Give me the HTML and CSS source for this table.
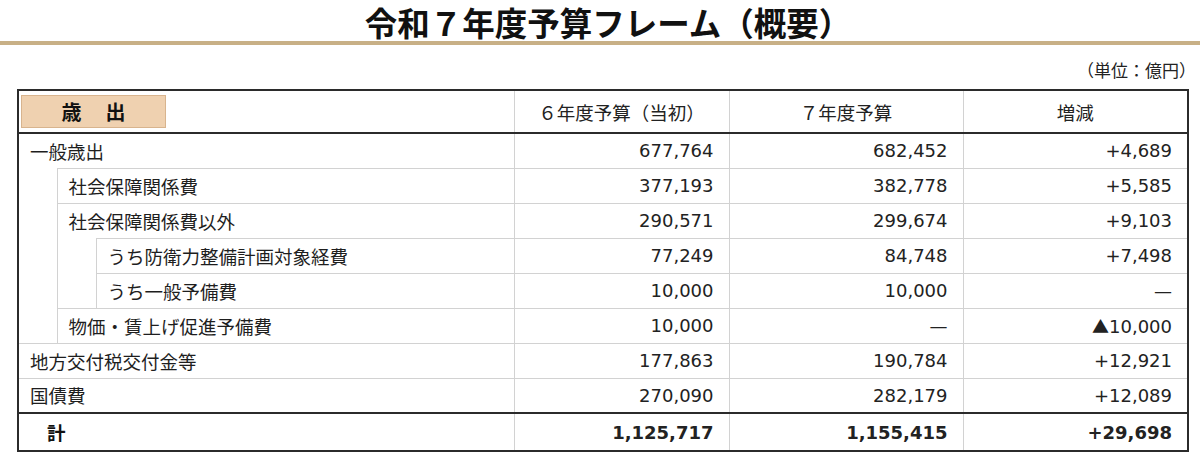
FILE: index.html
```html
<!DOCTYPE html>
<html lang="ja">
<head>
<meta charset="utf-8">
<title>令和７年度予算フレーム（概要）</title>
<link rel="stylesheet" href="styles.css">
</head>
<body>
<h1 class="title">令和７年度予算フレーム（概要）</h1>
<div class="rule"></div>
<div class="unit">（単位：億円）</div>
<table class="frame">
  <colgroup>
    <col class="c-ind">
    <col class="c-ind">
    <col class="c-label">
    <col class="c-prev">
    <col class="c-cur">
    <col class="c-diff">
  </colgroup>
  <thead>
    <tr class="head">
      <th colspan="3" class="h-first"><span class="tag">歳出</span></th>
      <th class="h-num">６年度予算（当初）</th>
      <th class="h-num">７年度予算</th>
      <th class="h-num">増減</th>
    </tr>
  </thead>
  <tbody>
    <tr>
      <td colspan="3" class="lbl">一般歳出</td>
      <td class="num">677,764</td><td class="num">682,452</td><td class="num">+4,689</td>
    </tr>
    <tr>
      <td rowspan="5" class="ind"></td>
      <td colspan="2" class="lbl">社会保障関係費</td>
      <td class="num">377,193</td><td class="num">382,778</td><td class="num">+5,585</td>
    </tr>
    <tr>
      <td colspan="2" class="lbl">社会保障関係費以外</td>
      <td class="num">290,571</td><td class="num">299,674</td><td class="num">+9,103</td>
    </tr>
    <tr>
      <td rowspan="2" class="ind"></td>
      <td class="lbl">うち防衛力整備計画対象経費</td>
      <td class="num">77,249</td><td class="num">84,748</td><td class="num">+7,498</td>
    </tr>
    <tr>
      <td class="lbl">うち一般予備費</td>
      <td class="num">10,000</td><td class="num">10,000</td><td class="num"><span class="dash">—</span></td>
    </tr>
    <tr>
      <td colspan="2" class="lbl">物価・賃上げ促進予備費</td>
      <td class="num">10,000</td><td class="num"><span class="dash">—</span></td><td class="num"><span class="tri">▲</span>10,000</td>
    </tr>
    <tr>
      <td colspan="3" class="lbl">地方交付税交付金等</td>
      <td class="num">177,863</td><td class="num">190,784</td><td class="num">+12,921</td>
    </tr>
    <tr>
      <td colspan="3" class="lbl">国債費</td>
      <td class="num">270,090</td><td class="num">282,179</td><td class="num">+12,089</td>
    </tr>
    <tr class="total">
      <td colspan="3" class="lbl t-lbl">計</td>
      <td class="num">1,125,717</td><td class="num">1,155,415</td><td class="num">+29,698</td>
    </tr>
  </tbody>
</table>
</body>
</html>
```
FILE: styles.css
```css
html, body {
  margin: 0;
  padding: 0;
  background: #ffffff;
}
body {
  width: 1200px;
  height: 455px;
  overflow: hidden;
  font-family: "Noto Sans CJK JP", "Noto Sans", sans-serif;
  color: #1e1e1e;
}
.title {
  margin: 0;
  height: 41px;
  font-size: 32.5px;
  line-height: 44px;
  font-weight: 700;
  text-align: center;
  color: #111;
  padding-left: 16px;
}
.rule {
  height: 4px;
  background: #c8b086;
}
.unit {
  height: 44px;
  box-sizing: border-box;
  padding: 13px 4px 0 0;
  font-size: 17px;
  line-height: 24px;
  text-align: right;
  color: #222;
}
.frame {
  margin-left: 17px;
  width: 1170px;
  table-layout: fixed;
  border-collapse: collapse;
  border: 2px solid #2b2b2b;
}
.c-ind { width: 39px; }
.c-label { width: 418px; }
.c-prev { width: 215px; }
.c-cur { width: 234px; }
.c-diff { width: 225px; }

.head {
  height: 43px;
}
.head th {
  font-weight: 400;
  font-size: 18.5px;
  color: #222;
  border-bottom: 2px solid #2b2b2b;
  padding: 0;
}
.h-first {
  text-align: left;
  padding: 0 0 0 2px !important;
}
.tag {
  display: inline-block;
  box-sizing: border-box;
  width: 145px;
  height: 33px;
  line-height: 31px;
  text-align: center;
  background: #efd1b0;
  border: 1px solid #d8b48e;
  font-size: 20px;
  font-weight: 700;
  letter-spacing: 24px;
  text-indent: 24px;
  color: #111;
  vertical-align: middle;
}
.h-num {
  border-left: 1px solid #d2d2d2;
  text-align: center;
}
tbody tr {
  height: 35px;
}
td {
  padding: 0;
  border-top: 1px solid #d2d2d2;
  font-size: 18.5px;
  white-space: nowrap;
}
.lbl {
  padding-left: 11px;
  color: #1e1e1e;
}
.ind {
  border-top: none;
  border-right: 1px solid #d2d2d2;
}
.num {
  border-left: 1px solid #d2d2d2;
  text-align: right;
  padding-right: 15px;
  font-family: "DejaVu Sans", "Noto Sans CJK JP", sans-serif;
  font-size: 18px;
  color: #222;
}
.dash {
  font-family: "DejaVu Sans", sans-serif;
  font-size: 18px;
}
.tri {
  font-family: "Noto Sans CJK JP", sans-serif;
  font-size: 17px;
}
.total {
  height: 38px;
}
.total td {
  border-top: 2px solid #2b2b2b;
  font-weight: 700;
}
.t-lbl {
  padding-left: 28px;
  color: #111;
}
```
